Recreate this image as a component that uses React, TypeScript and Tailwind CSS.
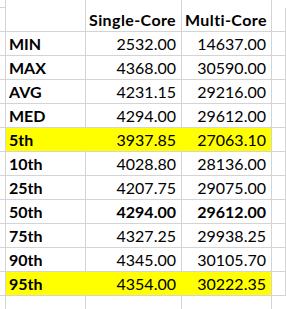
import React from "react";

type Row = { label: string; single: string; multi: string; hl?: boolean; bold?: boolean };

const rows: Row[] = [
  { label: "MIN", single: "2532.00", multi: "14637.00" },
  { label: "MAX", single: "4368.00", multi: "30590.00" },
  { label: "AVG", single: "4231.15", multi: "29216.00" },
  { label: "MED", single: "4294.00", multi: "29612.00" },
  { label: "5th", single: "3937.85", multi: "27063.10", hl: true },
  { label: "10th", single: "4028.80", multi: "28136.00" },
  { label: "25th", single: "4207.75", multi: "29075.00" },
  { label: "50th", single: "4294.00", multi: "29612.00", bold: true },
  { label: "75th", single: "4327.25", multi: "29938.25" },
  { label: "90th", single: "4345.00", multi: "30105.70" },
  { label: "95th", single: "4354.00", multi: "30222.35", hl: true },
];

const cell = "h-[24px] border-b border-r border-[#d4d4d4] leading-[23px] whitespace-nowrap overflow-hidden";

export default function App() {
  return (
    <div
      className="w-[286px] h-[309px] overflow-hidden bg-white text-black text-[16px]"
      style={{ fontFamily: "Lato, 'Open Sans', sans-serif" }}
    >
      <div className="grid grid-cols-[6px_80px_96px_90px_1fr]">
        {/* top partial row */}
        <div className="h-[8px] border-b border-r border-[#d4d4d4]" />
        <div className="h-[8px] border-r border-[#d4d4d4]" />
        <div className="h-[8px] border-r border-[#d4d4d4]" />
        <div className="h-[8px] border-r border-[#d4d4d4]" />
        <div className="h-[8px]" />

        {/* header */}
        <div className={cell} />
        <div className={cell} />
        <div className={`${cell} pl-[3px] font-bold tracking-[0.4px]`}>Single-Core</div>
        <div className={`${cell} pl-[3px] font-bold tracking-[0.4px]`}>Multi-Core</div>
        <div className={cell} />

        {rows.map((r) => (
          <React.Fragment key={r.label}>
            <div className={cell} />
            <div className={`${cell} pl-[3px] font-bold ${r.hl ? "bg-[#ffff00] border-r-[#ffff00]" : ""}`}>
              {r.label}
            </div>
            <div
              className={`${cell} pr-[5px] text-right ${r.bold ? "font-bold" : ""} ${
                r.hl ? "bg-[#ffff00] border-r-[#ffff00]" : ""
              }`}
            >
              {r.single}
            </div>
            <div className={`${cell} pr-[5px] text-right ${r.bold ? "font-bold" : ""} ${r.hl ? "bg-[#ffff00]" : ""}`}>
              {r.multi}
            </div>
            <div className={cell} />
          </React.Fragment>
        ))}

        {/* bottom partial row */}
        <div className="h-[20px] border-r border-[#d4d4d4]" />
        <div className="h-[20px] border-r border-[#d4d4d4]" />
        <div className="h-[20px] border-r border-[#d4d4d4]" />
        <div className="h-[20px] border-r border-[#d4d4d4]" />
        <div className="h-[20px]" />
      </div>
    </div>
  );
}
